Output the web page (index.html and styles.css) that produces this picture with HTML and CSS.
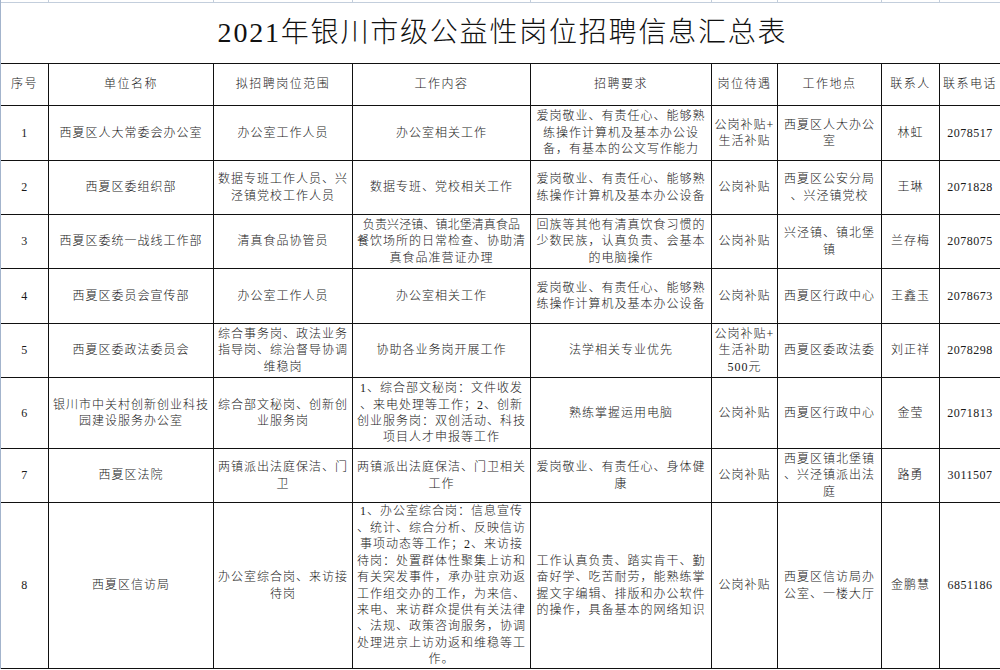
FILE: index.html
```html
<!DOCTYPE html>
<html lang="zh-CN">
<head>
<meta charset="utf-8">
<title>2021年银川市级公益性岗位招聘信息汇总表</title>
<link rel="stylesheet" href="styles.css">
</head>
<body>
<div class="sheet">
  <div class="strip">
    <i></i><i></i><i></i><i></i><i></i><i></i><i></i><i></i><i></i>
  </div>
  <div class="title-row">
    <h1 class="title">2021年银川市级公益性岗位招聘信息汇总表</h1>
  </div>
  <div class="grid">
    <div class="c h">序号</div>
    <div class="c h">单位名称</div>
    <div class="c h">拟招聘岗位范围</div>
    <div class="c h">工作内容</div>
    <div class="c h">招聘要求</div>
    <div class="c h">岗位待遇</div>
    <div class="c h">工作地点</div>
    <div class="c h">联系人</div>
    <div class="c h">联系电话</div>

    <div class="c num">1</div>
    <div class="c">西夏区人大常委会办公室</div>
    <div class="c">办公室工作人员</div>
    <div class="c">办公室相关工作</div>
    <div class="c">爱岗敬业、有责任心、能够熟<br>练操作计算机及基本办公设<br>备，有基本的公文写作能力</div>
    <div class="c">公岗补贴+<br>生活补贴</div>
    <div class="c">西夏区人大办公<br>室</div>
    <div class="c">林虹</div>
    <div class="c num">2078517</div>

    <div class="c num">2</div>
    <div class="c">西夏区委组织部</div>
    <div class="c">数据专班工作人员、兴<br>泾镇党校工作人员</div>
    <div class="c">数据专班、党校相关工作</div>
    <div class="c">爱岗敬业、有责任心、能够熟<br>练操作计算机及基本办公设备</div>
    <div class="c">公岗补贴</div>
    <div class="c">西夏区公安分局<br>、兴泾镇党校</div>
    <div class="c">王琳</div>
    <div class="c num">2071828</div>

    <div class="c num">3</div>
    <div class="c">西夏区委统一战线工作部</div>
    <div class="c">清真食品协管员</div>
    <div class="c"><div class="lines"><span class="tight">负责兴泾镇、镇北堡清真食品</span><br>餐饮场所的日常检查、协助清<br>真食品准营证办理</div></div>
    <div class="c">回族等其他有清真饮食习惯的<br>少数民族，认真负责、会基本<br>的电脑操作</div>
    <div class="c">公岗补贴</div>
    <div class="c">兴泾镇、镇北堡<br>镇</div>
    <div class="c">兰存梅</div>
    <div class="c num">2078075</div>

    <div class="c num">4</div>
    <div class="c">西夏区委员会宣传部</div>
    <div class="c">办公室工作人员</div>
    <div class="c">办公室相关工作</div>
    <div class="c">爱岗敬业、有责任心、能够熟<br>练操作计算机及基本办公设备</div>
    <div class="c">公岗补贴</div>
    <div class="c">西夏区行政中心</div>
    <div class="c">王鑫玉</div>
    <div class="c num">2078673</div>

    <div class="c num">5</div>
    <div class="c">西夏区委政法委员会</div>
    <div class="c">综合事务岗、政法业务<br>指导岗、综治督导协调<br>维稳岗</div>
    <div class="c">协助各业务岗开展工作</div>
    <div class="c">法学相关专业优先</div>
    <div class="c">公岗补贴+<br>生活补助<br>500元</div>
    <div class="c">西夏区委政法委</div>
    <div class="c">刘正祥</div>
    <div class="c num">2078298</div>

    <div class="c num">6</div>
    <div class="c">银川市中关村创新创业科技<br>园建设服务办公室</div>
    <div class="c">综合部文秘岗、创新创<br>业服务岗</div>
    <div class="c">1、综合部文秘岗：文件收发<br>、来电处理等工作；2、创新<br>创业服务岗：双创活动、科技<br>项目人才申报等工作</div>
    <div class="c">熟练掌握运用电脑</div>
    <div class="c">公岗补贴</div>
    <div class="c">西夏区行政中心</div>
    <div class="c">金莹</div>
    <div class="c num">2071813</div>

    <div class="c num">7</div>
    <div class="c">西夏区法院</div>
    <div class="c">两镇派出法庭保洁、门<br>卫</div>
    <div class="c">两镇派出法庭保洁、门卫相关<br>工作</div>
    <div class="c">爱岗敬业、有责任心、身体健<br>康</div>
    <div class="c">公岗补贴</div>
    <div class="c">西夏区镇北堡镇<br>、兴泾镇派出法<br>庭</div>
    <div class="c">路勇</div>
    <div class="c num">3011507</div>

    <div class="c num">8</div>
    <div class="c">西夏区信访局</div>
    <div class="c">办公室综合岗、来访接<br>待岗</div>
    <div class="c">1、办公室综合岗：信息宣传<br>、统计、综合分析、反映信访<br>事项动态等工作；2、来访接<br>待岗：处置群体性聚集上访和<br>有关突发事件，承办驻京劝返<br>工作组交办的工作，为来信、<br>来电、来访群众提供有关法律<br>、法规、政策咨询服务，协调<br>处理进京上访劝返和维稳等工<br>作。</div>
    <div class="c">工作认真负责、踏实肯干、勤<br>奋好学、吃苦耐劳，能熟练掌<br>握文字编辑、排版和办公软件<br>的操作，具备基本的网络知识</div>
    <div class="c">公岗补贴</div>
    <div class="c">西夏区信访局办<br>公室、一楼大厅</div>
    <div class="c">金鹏慧</div>
    <div class="c num">6851186</div>
  </div>
</div>
</body>
</html>
```

FILE: styles.css
```css
html, body {
  margin: 0;
  padding: 0;
  background: #ffffff;
}

body {
  width: 1000px;
  height: 670px;
  overflow: hidden;
  font-family: "Liberation Serif", "Noto Sans CJK SC", serif;
  color: #1a1a1a;
}

.sheet {
  width: 1001px;
  border-left: 1px solid #a3b4cc;
  box-sizing: border-box;
}

.strip {
  display: grid;
  grid-template-columns: 48px 165px 139px 178px 181px 66px 104px 58px 61px;
  height: 3px;
  border-bottom: 1px solid #c3cedc;
  box-sizing: border-box;
}

.strip i {
  border-right: 1px solid #c3cedc;
}

.title-row {
  height: 60px;
  display: flex;
  align-items: center;
  justify-content: center;
  border-right: 1px solid #c3cedc;
  box-sizing: border-box;
}

.title {
  margin: 0 0 0 4px;
  font-size: 28px;
  font-weight: 300;
  letter-spacing: 1.8px;
  line-height: 1;
  color: #111;
}

.grid {
  display: grid;
  grid-template-columns: 48px 165px 139px 178px 181px 66px 104px 58px 61px;
  grid-template-rows: 42px 55px 54px 54px 55px 54px 71px 54px 166px;
  border-top: 1px solid #111;
}

.c {
  box-sizing: border-box;
  border-right: 1px solid #111;
  border-bottom: 1px solid #111;
  display: flex;
  align-items: center;
  justify-content: center;
  text-align: center;
  white-space: nowrap;
  font-size: 12px;
  font-weight: 300;
  letter-spacing: 1px;
  line-height: 16.4px;
  overflow: hidden;
}

.lines {
  text-align: center;
}

.h {
  letter-spacing: 1.5px;
}

.num {
  letter-spacing: 0.5px;
}

.tight {
  letter-spacing: 0.1px;
}
```
